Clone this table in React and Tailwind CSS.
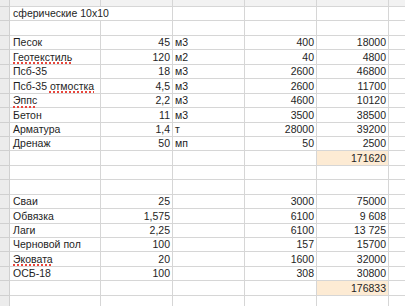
import React from "react";

const rows = [
  { a: "сферические 10x10", title: true },
  {},
  { a: "Песок", b: "45", c: "м3", d: "400", e: "18000" },
  { a: "Геотекстиль", b: "120", c: "м2", d: "40", e: "4800", typo: [["Геотекстиль", true]] },
  { a: "Псб-35", b: "18", c: "м3", d: "2600", e: "46800" },
  { a: "Псб-35 отмостка", b: "4,5", c: "м3", d: "2600", e: "11700", typo: [["Псб-35 ", false], ["отмостка", true]] },
  { a: "Эппс", b: "2,2", c: "м3", d: "4600", e: "10120", typo: [["Эппс", true]] },
  { a: "Бетон", b: "11", c: "м3", d: "3500", e: "38500" },
  { a: "Арматура", b: "1,4", c: "т", d: "28000", e: "39200" },
  { a: "Дренаж", b: "50", c: "мп", d: "50", e: "2500" },
  { e: "171620", total: true },
  {},
  {},
  { a: "Сваи", b: "25", d: "3000", e: "75000" },
  { a: "Обвязка", b: "1,575", d: "6100", e: "9 608" },
  { a: "Лаги", b: "2,25", d: "6100", e: "13 725" },
  { a: "Черновой пол", b: "100", d: "157", e: "15700" },
  { a: "Эковата", b: "20", d: "1600", e: "32000", typo: [["Эковата", true]] },
  { a: "ОСБ-18", b: "100", d: "308", e: "30800" },
  { e: "176833", total: true },
  {},
];

const cell = "border-r border-b border-[#d6d6d6] overflow-visible whitespace-pre";

// spellcheck-style red dotted underline for some words
function Label({ row }) {
  if (!row.typo) return <span>{row.a || ""}</span>;
  return (
    <span>
      {row.typo.map(([t, bad], i) =>
        bad ? (
          <span
            key={i}
            className="underline decoration-dotted decoration-[#e8463c] decoration-[1.5px] underline-offset-[2px]"
          >
            {t}
          </span>
        ) : (
          <span key={i}>{t}</span>
        )
      )}
    </span>
  );
}

export default function App() {
  return (
    <div
      className="w-[405px] h-[306px] overflow-hidden bg-white text-[#1e1e1e] text-[10.5px] leading-none"
      style={{ fontFamily: '"Liberation Sans", Arial, sans-serif' }}
    >
      {/* header strip */}
      <div className="flex h-[7px] bg-[#f2f2f2]">
        <div className="w-[10px] border-r border-b border-[#d0d0d0] bg-[#ececec]" />
        <div className="w-[91px] border-r border-b border-[#d6d6d6]" />
        <div className="w-[72px] border-r border-b border-[#d6d6d6]" />
        <div className="w-[72px] border-r border-b border-[#d6d6d6]" />
        <div className="w-[72px] border-r border-b border-[#d6d6d6]" />
        <div className="w-[72px] border-r border-b border-[#d6d6d6]" />
        <div className="flex-1 border-b border-[#d6d6d6]" />
      </div>

      {rows.map((row, i) => (
        <div key={i} className="flex h-[14.45px]">
          <div className="w-[10px] shrink-0 border-r border-b border-[#d0d0d0] bg-[#ececec]" />
          {row.title ? (
            <div className={`w-[163px] shrink-0 flex items-center pl-[3px] ${cell}`}>{row.a}</div>
          ) : (
            <>
              <div className={`w-[91px] shrink-0 flex items-center pl-[3px] ${cell}`}>
                <Label row={row} />
              </div>
              <div className={`w-[72px] shrink-0 flex items-center justify-end pr-[2px] ${cell}`}>
                {row.b || ""}
              </div>
            </>
          )}
          <div className={`w-[72px] shrink-0 flex items-center pl-[2px] ${cell}`}>{row.c || ""}</div>
          <div className={`w-[72px] shrink-0 flex items-center justify-end pr-[2px] ${cell}`}>
            {row.d || ""}
          </div>
          <div
            className={`w-[72px] shrink-0 flex items-center justify-end pr-[2px] ${cell} ${
              row.total ? "bg-[#fdebd4]" : ""
            }`}
          >
            {row.e || ""}
          </div>
          <div className="flex-1 border-b border-[#d6d6d6]" />
        </div>
      ))}
    </div>
  );
}
